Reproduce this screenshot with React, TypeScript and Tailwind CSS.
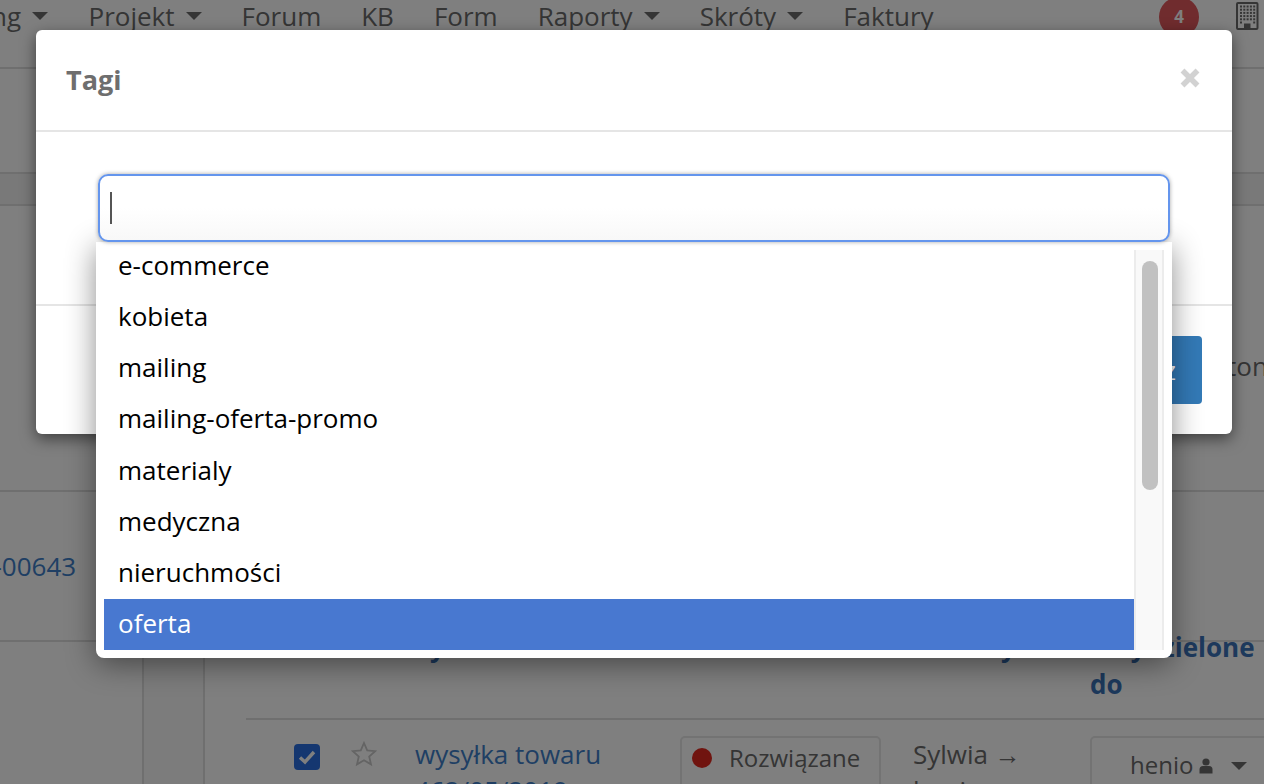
import React from "react";

const Caret: React.FC<{ className?: string }> = ({ className = "" }) => (
  <span className={`inline-block w-0 h-0 border-x-[8px] border-x-transparent border-t-[8px] border-t-[#6a6a6a] ${className}`} />
);

const BuildingIcon: React.FC = () => (
  <svg width="23" height="30" viewBox="0 0 23 30" className="shrink-0">
    <rect x="1" y="3" width="20.5" height="26" rx="1" fill="none" stroke="#6a6a6a" strokeWidth="2" />
    {[0, 1, 2, 3, 4, 5].map((r) =>
      [0, 1, 2, 3, 4].map((c) =>
        r > 4 && c > 0 && c < 4 ? null : (
          <rect key={`${r}-${c}`} x={4 + c * 3.3} y={5.5 + r * 3.2} width="2" height="2" fill="#6a6a6a" />
        )
      )
    )}
    <rect x="8" y="23.5" width="6.5" height="5" fill="#6a6a6a" />
  </svg>
);

const NAV_ITEMS: { label: string; caret?: boolean }[] = [
  { label: "Projekt", caret: true },
  { label: "Forum" },
  { label: "KB" },
  { label: "Form" },
  { label: "Raporty", caret: true },
  { label: "Skróty", caret: true },
  { label: "Faktury" },
];

const TAGS = ["e-commerce", "kobieta", "mailing", "mailing-oferta-promo", "materialy", "medyczna", "nieruchmości", "oferta"];

const Page: React.FC = () => (
  <div className="bg-white text-[#6a6a6a] text-[26px] h-[784px] overflow-hidden">
    <nav className="h-[69px] border-b-2 border-[#dedede] flex items-start relative">
      <div className="flex items-center h-[32px] gap-[40px] w-full pl-[88.5px]">
        {NAV_ITEMS.map((item) => (
          <a key={item.label} className="flex items-center gap-[11px] leading-[32px] whitespace-nowrap">
            {item.label}
            {item.caret && <Caret />}
          </a>
        ))}
      </div>
      <div className="absolute left-0 top-0 h-[32px] flex items-center gap-[11px] leading-[32px]">
        <span className="-ml-[9px]">ng</span>
        <Caret />
      </div>
      <div className="absolute left-[1159px] -top-[3px] w-[40px] h-[40px] rounded-full bg-[#e0585c] text-white text-[17px] font-bold flex items-center justify-center">
        4
      </div>
      <div className="absolute left-[1236px] top-0">
        <BuildingIcon />
      </div>
    </nav>

    <div className="h-[103px]" />
    <div className="h-[34px] bg-[#f2f2f2] border-y-2 border-[#dedede]" />
    <div className="h-[160px] pl-[1227px] pt-[142px] leading-[36px] whitespace-nowrap">ton</div>
    <div className="h-[124px]" />

    <section className="h-[150px] border-t-2 border-[#dedede] flex items-center overflow-hidden">
      <a className="text-[#3f7fc8] -ml-[6.5px] leading-[36px]">-00643</a>
    </section>

    <div className="border-t-2 border-[#dedede] flex h-[200px]">
      <div className="w-[142px] shrink-0" />
      <div className="w-[63px] shrink-0 border-x-2 border-[#dedede] bg-[#f8f8f8]" />
      <div className="flex-1 min-w-0 pl-[41px]">
        <div className="h-[78px] border-b-2 border-[#dedede] relative font-bold text-[#3a72b8] leading-[37px]">
          <div className="absolute left-[169px] top-[-13.5px]">Tytuł</div>
          <div className="absolute left-[668px] top-[-13.5px]">Autorzy</div>
          <div className="absolute left-[844px] top-[-13.5px]">
            <div>Przydzielone</div>
            <div>do</div>
          </div>
        </div>
        <div className="flex items-start pt-[16px] h-[100px]">
          <span className="ml-[48px] mt-[8px] w-[26px] h-[26px] rounded-[4px] bg-[#2a6fe0] flex items-center justify-center shrink-0">
            <svg width="18" height="16" viewBox="0 0 18 16">
              <path d="M2 8.5 L7 13 L16 3" fill="none" stroke="#fff" strokeWidth="3.4" />
            </svg>
          </span>
          <svg width="26" height="26" viewBox="0 0 26 26" className="ml-[31px] mt-[5px] shrink-0">
            <path d="M13 2 L16.2 9.4 L24.2 10.2 L18.2 15.5 L20 23.4 L13 19.3 L6 23.4 L7.8 15.5 L1.8 10.2 L9.8 9.4 Z" fill="none" stroke="#c8c8c8" strokeWidth="1.8" />
          </svg>
          <div className="ml-[38px] w-[265px] text-[#3f7fc8] leading-[36px] shrink-0">
            <div>wysyłka towaru</div>
            <div>462/05/2019</div>
          </div>
          <div className="w-[201px] h-[90px] border-2 border-[#e6e6e6] rounded-[5px] flex items-start pl-[10px] pt-[3px] gap-[17px] text-[24px] leading-[34px] shrink-0">
            <span className="w-[20px] h-[20px] rounded-full bg-[#e0281e] mt-[7px] shrink-0" />
            Rozwiązane
          </div>
          <div className="ml-[32px] w-[177px] leading-[36px] shrink-0">
            <div>Sylwia →</div>
            <div>henio</div>
          </div>
          <div className="w-[200px] h-[90px] border-2 border-[#e6e6e6] rounded-[5px] flex items-start pl-[38px] pt-[10px] leading-[34px] text-[24px] shrink-0">
            henio
            <svg width="14" height="16" viewBox="0 0 14 16" className="ml-[6px] mt-[10px]">
              <circle cx="7" cy="4" r="3.6" fill="#6a6a6a" />
              <path d="M0.5 15.5 V11.5 Q0.5 8 4 8 H10 Q13.5 8 13.5 11.5 V15.5 Z" fill="#6a6a6a" />
            </svg>
            <Caret className="ml-[18px] mt-[14px]" />
          </div>
        </div>
      </div>
    </div>
  </div>
);

const App: React.FC = () => {
  return (
    <div className="relative w-[1264px] h-[784px] overflow-hidden font-['Open_Sans',sans-serif]">
      <Page />
      <div className="absolute inset-0 bg-black/50" />

      <div className="absolute left-[36px] top-[30px] w-[1196px] bg-white rounded-[6px] shadow-[0_5px_15px_rgba(0,0,0,0.5)]">
        <header className="h-[102px] border-b-2 border-[#e5e5e5] flex items-center justify-between pl-[30px] pr-[32px]">
          <h4 className="text-[27px] font-bold text-[#6e6e6e] leading-[36px]">Tagi</h4>
          <svg width="20" height="20" viewBox="0 0 20 20" className="-mt-[5px]">
            <path d="M2.5 2.5 L17.5 17.5 M17.5 2.5 L2.5 17.5" stroke="#d2d2d2" strokeWidth="5.5" />
          </svg>
        </header>

        <div className="h-[172px] px-[62px] pt-[42px]">
          <div className="relative">
            <div className="relative z-20 h-[68px] rounded-[10px] border-2 border-[#6495ed] bg-gradient-to-b from-white from-50% to-[#f8f8f8] shadow-[0_0_4px_rgba(0,0,0,0.35)] flex items-center pl-[10px]">
              <span className="w-[2px] h-[32px] bg-[#555]" />
            </div>
            <div className="absolute left-[-2px] top-[68px] w-[1076px] h-[416px] bg-white rounded-b-[8px] shadow-[0_6px_30px_rgba(0,0,0,0.45)] p-[8px] flex z-10">
              <ul className="flex-1 overflow-hidden text-black">
                <div className="-mt-[9.2px]">
                  {TAGS.map((tag) => (
                    <li
                      key={tag}
                      className={`h-[51.2px] pl-[14px] text-[26px] leading-[49px] ${tag === "oferta" ? "bg-[#4878d0] text-white" : ""}`}
                    >
                      {tag}
                    </li>
                  ))}
                </div>
              </ul>
              <div className="w-[30px] h-full bg-[#f9f9f9] border-x-2 border-[#ececec] pt-[11px] pl-[1px] flex justify-center">
                <div className="w-[16px] h-[229px] rounded-full bg-[#c1c1c1]" />
              </div>
            </div>
          </div>
        </div>

        <footer className="h-[130px] border-t-2 border-[#e5e5e5] flex items-center justify-end pr-[30px]">
          <button className="h-[68px] pl-[21px] pr-[26px] rounded-[4px] bg-[#337ab7] text-white text-[26px]">Zapisz</button>
        </footer>
      </div>
    </div>
  );
};

export default App;
